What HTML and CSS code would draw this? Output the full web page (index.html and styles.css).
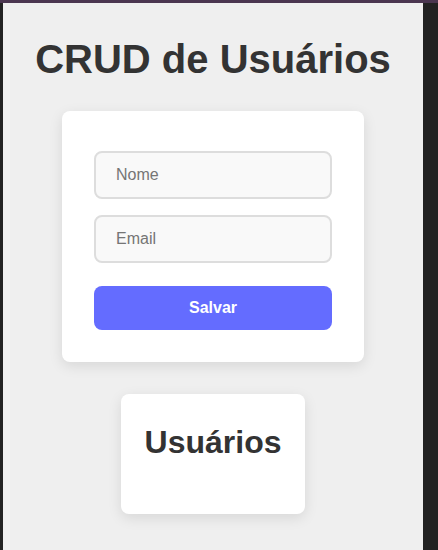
FILE: index.html
```html
<!DOCTYPE html>
<html lang="pt-BR">
<head>
<meta charset="utf-8">
<title>CRUD de Usuários</title>
<link rel="stylesheet" href="styles.css">
</head>
<body>
<div class="topbar"></div>
<div class="frame">
  <div class="edge"></div>
  <main class="app">
    <h1 class="title">CRUD de Usuários</h1>
    <form class="card form-card">
      <input class="field" type="text" placeholder="Nome">
      <input class="field" type="email" placeholder="Email">
      <button class="btn" type="button">Salvar</button>
    </form>
    <section class="card list-card">
      <h2 class="list-title">Usuários</h2>
    </section>
  </main>
  <div class="side"></div>
</div>
</body>
</html>
```
FILE: styles.css
```css
* { box-sizing: border-box; }
html, body { margin: 0; padding: 0; }
body {
  background: #222222;
  font-family: "Liberation Sans", Arial, sans-serif;
  height: 550px;
  overflow: hidden;
}
.topbar { height: 3px; background: #4b3650; }
.frame { display: flex; height: 547px; }
.edge { width: 3px; background: #222222; flex: none; }
.side { flex: 1; background: #222222; }
.app {
  width: 420px;
  flex: none;
  background: #efefef;
  display: flex;
  flex-direction: column;
  align-items: center;
  padding-top: 33px;
}
.title {
  margin: 0 0 29px;
  font-size: 40px;
  line-height: 46px;
  font-weight: bold;
  color: #333333;
}
.card {
  background: #ffffff;
  border-radius: 8px;
  box-shadow: 0 4px 14px rgba(0, 0, 0, 0.1);
}
.form-card {
  width: 302px;
  padding: 32px;
  display: flex;
  flex-direction: column;
}
.field {
  height: 48px;
  margin: 8px 0;
  padding: 0 20px;
  border: 2px solid #dddddd;
  border-radius: 8px;
  background: #f9f9f9;
  font-family: "Liberation Sans", Arial, sans-serif;
  font-size: 16px;
  color: #333;
  outline: none;
}
.field::placeholder { color: #757575; }
.btn {
  margin-top: 15px;
  height: 44px;
  border: none;
  border-radius: 8px;
  background: #646cff;
  color: #ffffff;
  font-family: "Liberation Sans", Arial, sans-serif;
  font-size: 16px;
  font-weight: bold;
}
.list-card {
  margin-top: 32px;
  padding: 30px 24px 53px;
}
.list-title {
  margin: 0;
  font-size: 32px;
  line-height: 37px;
  font-weight: bold;
  color: #333333;
}
```
